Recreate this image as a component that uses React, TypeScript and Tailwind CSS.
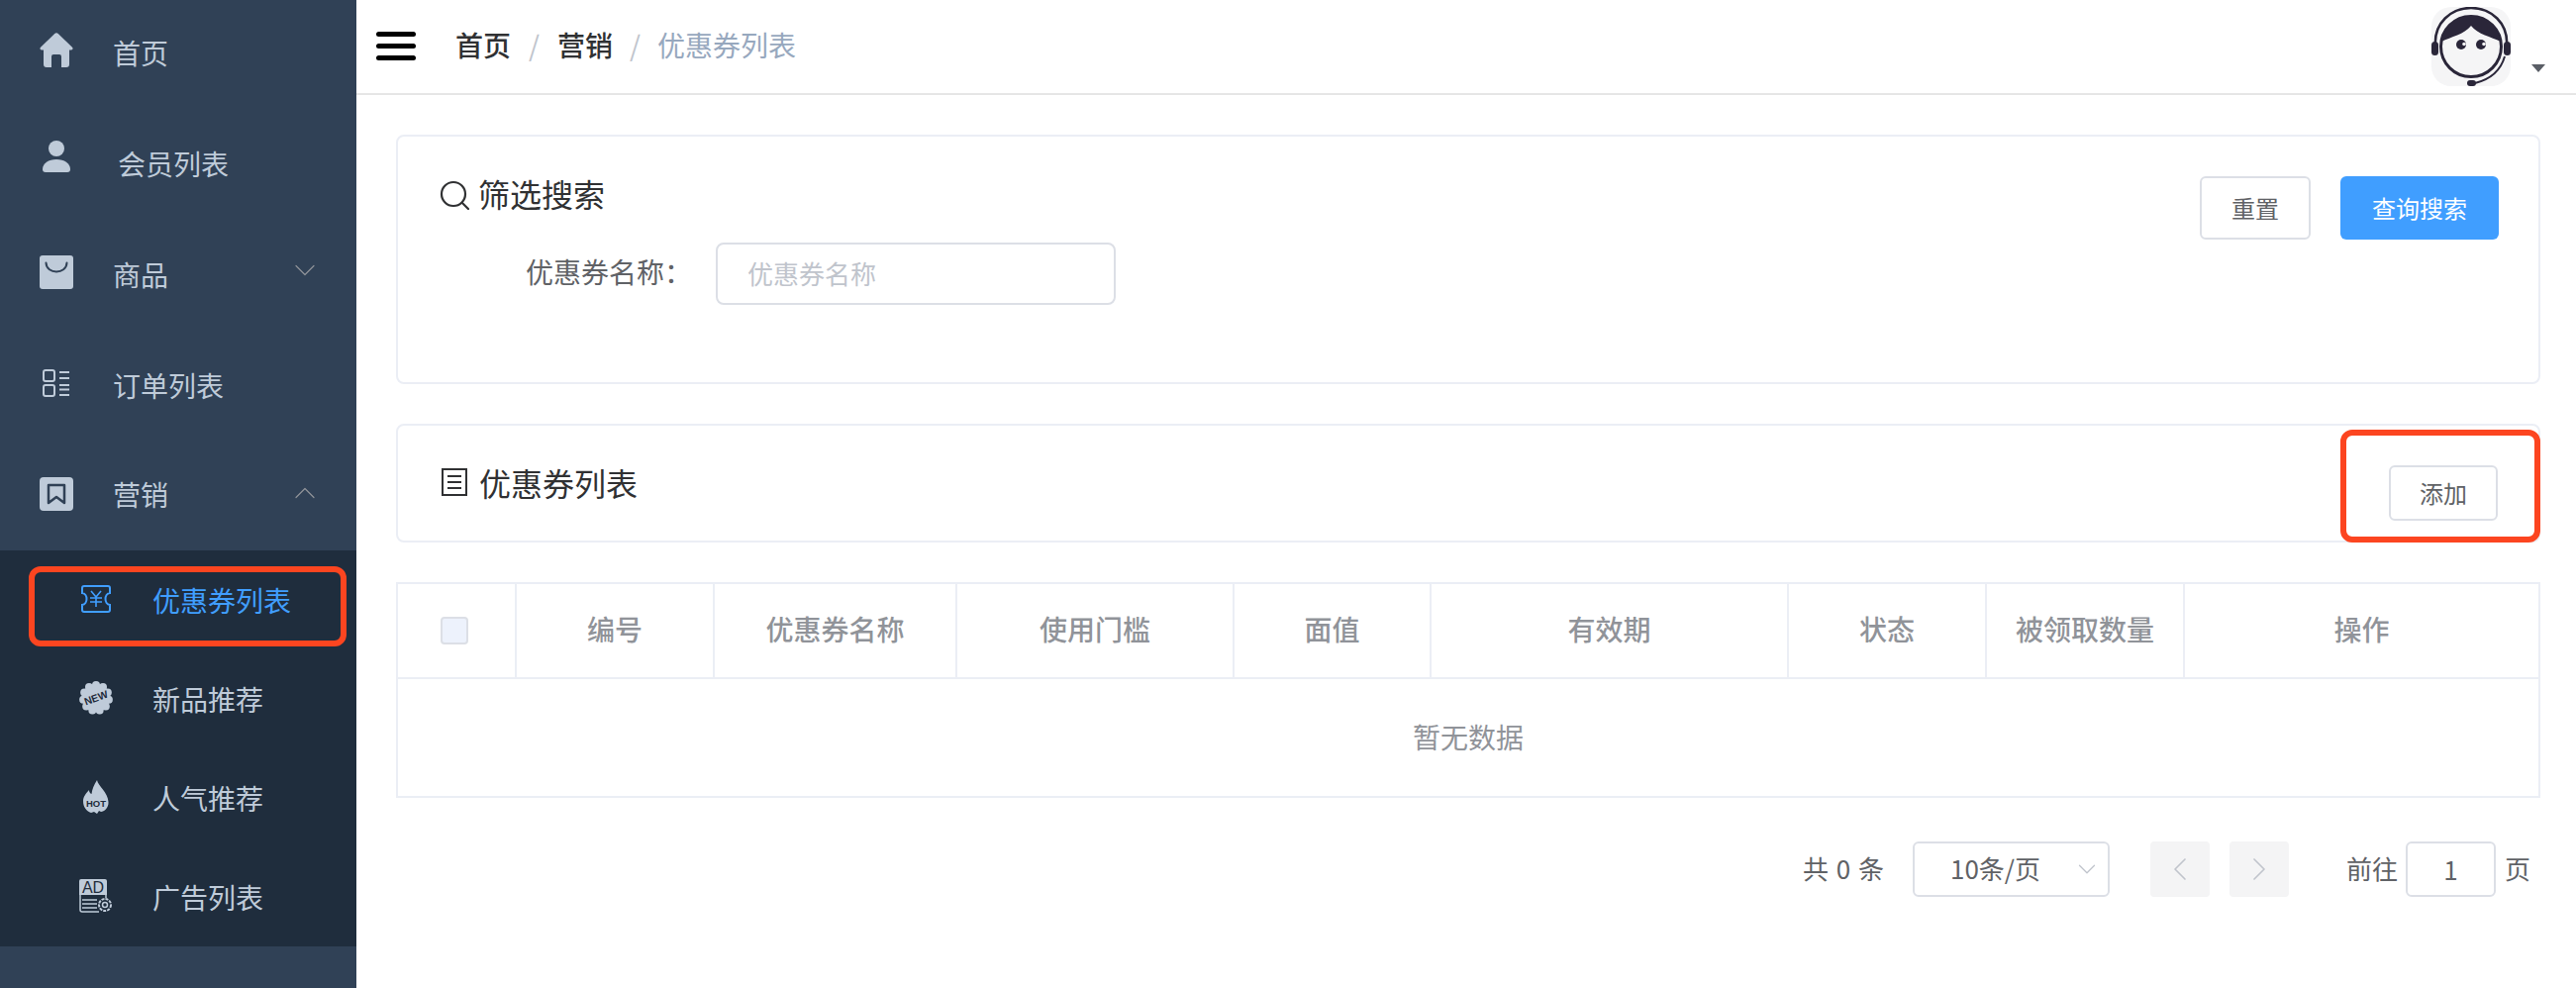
import { ChevronDown, ChevronLeft, ChevronRight, ChevronUp } from 'lucide-react';

const font = { fontFamily: '"Noto Sans CJK SC", "Noto Sans", sans-serif' };

function HomeIcon() {
    return (
        <svg viewBox="0 0 34 35" className="w-[34px] h-[35px] fill-current">
            <path d="M15 1.2a3 3 0 0 1 4 0l14 13.6c1 1 .5 2.7-1 2.7h-2V32a3 3 0 0 1-3 3h-5V24a2 2 0 0 0-2-2h-6a2 2 0 0 0-2 2v11H7a3 3 0 0 1-3-3V17.500H2c-1.500 0-2-1.700-1-2.700z" />
        </svg>
    );
}

function PersonIcon() {
    return (
        <svg viewBox="0 0 28 32" className="w-[28px] h-[32px] fill-current">
            <circle cx="14" cy="8" r="8" />
            <path d="M0 29c0-6 6-10 14-10s14 4 14 10c0 2-1 3-3 3H3c-2 0-3-1-3-3z" />
        </svg>
    );
}

function BagIcon() {
    return (
        <svg viewBox="0 0 34 34" className="w-[34px] h-[34px]">
            <rect width="34" height="34" rx="3" className="fill-current" />
            <path d="M6.500 7.500c.5 12 20.500 12 21 0" fill="none" stroke="#304156" strokeWidth="2" strokeLinecap="round" />
        </svg>
    );
}

function OrderIcon() {
    return (
        <svg viewBox="0 0 28 28" className="w-[28px] h-[28px] fill-none stroke-current" strokeWidth="2">
            <rect x="1" y="1" width="11" height="11" rx="2" />
            <rect x="1" y="16" width="11" height="11" rx="2" />
            <path d="M17 3h10M17 9h10M17 16h10M17 20.500h10M17 26h10" />
        </svg>
    );
}

function BookmarkIcon() {
    return (
        <svg viewBox="0 0 34 34" className="w-[34px] h-[34px]">
            <rect width="34" height="34" rx="4" className="fill-current" />
            <path d="M9 8h16v18l-8-6-8 6z" fill="none" stroke="#304156" strokeWidth="2.500" strokeLinejoin="round" />
        </svg>
    );
}

function CouponIcon() {
    return (
        <svg viewBox="0 0 30 28" className="w-[30px] h-[28px] fill-none stroke-current" strokeWidth="2">
            <path d="M1 3a2 2 0 0 1 2-2h24a2 2 0 0 1 2 2v5c-6 .5-6 11.500 0 12v5a2 2 0 0 1-2 2H3a2 2 0 0 1-2-2v-5c6-.5 6-11.500 0-12z" />
            <path d="M10 6l5 6 5-6M9 13h12M9 17h12M15 12v10" strokeWidth="1.600" />
        </svg>
    );
}

const bumps = Array.from({ length: 11 }, (_, i) => (i * 2 * Math.PI) / 11);

function NewIcon() {
    return (
        <svg viewBox="0 0 34 34" className="w-[34px] h-[34px]">
            <g className="fill-current">
                <circle cx="17" cy="17" r="14" />
                {bumps.map((a) => (
                    <circle key={a} cx={17 + 13 * Math.sin(a)} cy={17 - 13 * Math.cos(a)} r="4" />
                ))}
            </g>
            <text x="17" y="20.500" textAnchor="middle" fontSize="10.500" fontWeight="700" fill="#1f2d3d" transform="rotate(-20 17 17)" fontFamily="Liberation Sans, sans-serif">
                NEW
            </text>
        </svg>
    );
}

function HotIcon() {
    return (
        <svg viewBox="0 0 26 34" className="w-[26px] h-[34px]">
            <path
                className="fill-current"
                d="M14 0C15 6 25 12 25.500 22 26 28 21 32 18 32L16 31 14 34 11 32 8 33C3 31 0 27 0 21 0 17 3 13 6 10 6 12 7 13.500 8.500 14 9 9 11 5 14 0z"
            />
            <text x="13" y="26.500" textAnchor="middle" fontSize="9.500" fontWeight="700" fill="#1f2d3d" fontFamily="Liberation Sans, sans-serif">
                HOT
            </text>
        </svg>
    );
}

function AdIcon() {
    return (
        <svg viewBox="0 0 34 34" className="w-[34px] h-[34px]">
            <path className="fill-current" d="M2 0h24a2 2 0 0 1 2 2v14H0V2a2 2 0 0 1 2-2z" />
            <text x="14" y="14" textAnchor="middle" fontSize="16" fill="#1f2d3d" fontFamily="Liberation Sans, sans-serif">
                AD
            </text>
            <g className="fill-none stroke-current" strokeWidth="1.500">
                <path d="M1 15v16a2 2 0 0 0 2 2h17" />
                <path d="M27 15v4M3 21h15M3 25h15M3 29h15" />
                <circle cx="26" cy="26" r="6" strokeWidth="2" strokeDasharray="3 1" />
                <circle cx="26" cy="26" r="2.500" />
            </g>
        </svg>
    );
}

function MenuRow({ icon, iconClass, label, textClass, height, chevron }: { icon: React.ReactNode; iconClass: string; label: string; textClass?: string; height: string; chevron?: 'up' | 'down' }) {
    return (
        <div className={`flex ${height} items-center text-[#bfcbd9]`}>
            <div className={`w-[114px] shrink-0 flex justify-center ${iconClass}`}>{icon}</div>
            <span className={`text-[28px] leading-none pb-[6px] ${textClass ?? ''}`}>{label}</span>
            {chevron === 'down' && <ChevronDown className="ml-auto mr-[34px] mb-[14px] w-[36px] h-[36px] text-[#909399]" strokeWidth={0.8} />}
            {chevron === 'up' && <ChevronUp className="ml-auto mr-[34px] mb-[8px] w-[36px] h-[36px] text-[#909399]" strokeWidth={0.8} />}
        </div>
    );
}

function SubRow({ icon, label, active }: { icon: React.ReactNode; label: string; active?: boolean }) {
    return (
        <div className={`flex h-[100px] items-center ${active ? 'text-[#409eff]' : 'text-[#bfcbd9]'}`}>
            <div className="w-[154px] shrink-0 flex justify-center pl-[40px] pb-[2px]">{icon}</div>
            <span className="text-[28px] leading-none">{label}</span>
        </div>
    );
}

function Sidebar() {
    return (
        <aside className="w-[360px] shrink-0 bg-[#304156]">
            <MenuRow icon={<HomeIcon />} iconClass="pb-[12px]" label="首页" height="h-[112px]" />
            <MenuRow icon={<PersonIcon />} iconClass="pb-[20px]" label="会员列表" textClass="ml-[5px]" height="h-[112px]" />
            <MenuRow icon={<BagIcon />} iconClass="pb-[10px]" label="商品" height="h-[112px]" chevron="down" />
            <MenuRow icon={<OrderIcon />} iconClass="pb-[10px]" label="订单列表" height="h-[112px]" />
            <MenuRow icon={<BookmarkIcon />} iconClass="pb-[6px]" label="营销" height="h-[108px]" chevron="up" />
            <div className="relative bg-[#1f2d3d]">
                <SubRow icon={<CouponIcon />} label="优惠券列表" active />
                <SubRow icon={<NewIcon />} label="新品推荐" />
                <SubRow icon={<HotIcon />} label="人气推荐" />
                <SubRow icon={<AdIcon />} label="广告列表" />
                <div className="absolute left-[29px] top-[16px] w-[321px] h-[81px] border-[6px] border-[#fc4520] rounded-[12px]" />
            </div>
        </aside>
    );
}

function Avatar() {
    return (
        <svg viewBox="0 0 80 80" className="w-[80px] h-[80px]">
            <rect width="80" height="80" rx="20" fill="#f5f5f6" />
            <path d="M4 40C2 16 20 1 40 1s38 15 36 39" fill="none" stroke="#2a2639" strokeWidth="2.500" />
            <rect x="0" y="35" width="7" height="14" rx="3.500" fill="#2a2639" />
            <rect x="73" y="35" width="7" height="14" rx="3.500" fill="#2a2639" />
            <circle cx="40" cy="40" r="30.500" fill="none" stroke="#2a2639" strokeWidth="3" />
            <path d="M10 35C20 30 33 28 40 19 47 28 60 30 70 35 66 18 54 9 40 9S14 18 10 35z" fill="#2a2639" />
            <circle cx="30" cy="38" r="5" fill="#2a2639" />
            <circle cx="50" cy="38" r="5" fill="#2a2639" />
            <circle cx="33" cy="37.500" r="1.800" fill="#f5f5f6" />
            <circle cx="53" cy="37.500" r="1.800" fill="#f5f5f6" />
            <path d="M74 50C70 64 60 73 44 77" fill="none" stroke="#2a2639" strokeWidth="2" />
            <rect x="36" y="74" width="9" height="6" rx="3" fill="#2a2639" />
        </svg>
    );
}

function Header() {
    return (
        <header className="h-[96px] shrink-0 border-b-2 border-[#e6e6e6] flex items-center pl-[20px] pr-[31px]">
            <div className="w-[40px] flex flex-col gap-[7px] mb-[1px]">
                <div className="h-[5px] rounded-full bg-black" />
                <div className="h-[5px] rounded-full bg-black" />
                <div className="h-[5px] rounded-full bg-black" />
            </div>
            <nav className="ml-[40px] flex items-center text-[28px] leading-none mb-[4px]">
                <span className="font-medium text-[#303133]">首页</span>
                <span className="mx-[18px] text-[#c0c4cc]">/</span>
                <span className="font-medium text-[#303133]">营销</span>
                <span className="mx-[17px] text-[#c0c4cc]">/</span>
                <span className="text-[#97a8be]">优惠券列表</span>
            </nav>
            <div className="ml-auto flex items-end">
                <Avatar />
                <div className="ml-[21px] mb-[14px] w-0 h-0 border-x-[7px] border-x-transparent border-t-[8px] border-t-[#5a5e66]" />
            </div>
        </header>
    );
}

function SearchIcon() {
    return (
        <svg viewBox="0 0 30 30" className="w-[30px] h-[30px] fill-none stroke-[#303133]" strokeWidth="2.200">
            <circle cx="14" cy="14" r="12" />
            <path d="M23 23l6 6" strokeLinecap="round" />
        </svg>
    );
}

function ListIcon() {
    return (
        <svg viewBox="0 0 26 28" className="w-[26px] h-[28px] fill-none stroke-[#303133]" strokeWidth="2">
            <rect x="1" y="1" width="24" height="26" />
            <path d="M6 8h14M6 14h14M6 20h14" />
        </svg>
    );
}

function SearchCard() {
    return (
        <section className="h-[252px] border-2 border-[#ebeef5] rounded-[8px] flex justify-between pl-[42px] pr-[40px] pt-[40px]">
            <div className="-mt-[3px]">
                <div className="flex items-center gap-[9px] text-[32px] leading-[40px] text-[#303133]">
                    <SearchIcon />
                    <span className="pb-[3px]">筛选搜索</span>
                </div>
                <div className="mt-[27px] flex items-center ml-[87px]">
                    <span className="text-[28px] leading-none text-[#606266] w-[192px] pb-[5px]">优惠券名称：</span>
                    <div className="w-[404px] h-[63px] border-2 border-[#dcdfe6] rounded-[8px] flex items-center px-[30px] pb-[3px] text-[26px] text-[#c0c4cc]">优惠券名称</div>
                </div>
            </div>
            <div className="flex gap-[30px]">
                <button className="w-[112px] h-[64px] border-2 border-[#dcdfe6] rounded-[6px] text-[24px] text-[#606266]">重置</button>
                <button className="w-[160px] h-[64px] rounded-[6px] bg-[#409eff] text-[24px] text-white">查询搜索</button>
            </div>
        </section>
    );
}

function ListCard() {
    return (
        <section className="relative h-[120px] border-2 border-[#ebeef5] rounded-[8px] flex items-center justify-between pl-[44px] pr-[41px]">
            <div className="flex items-center gap-[12px] text-[32px] leading-none text-[#303133] mb-[2px]">
                <ListIcon />
                <span>优惠券列表</span>
            </div>
            <button className="w-[110px] h-[56px] mt-[20px] border-2 border-[#dcdfe6] rounded-[6px] text-[24px] text-[#606266]">添加</button>
            <div className="absolute -right-[2px] -bottom-[2px] w-[202px] h-[114px] border-[6px] border-[#fc4520] rounded-[12px]" />
        </section>
    );
}

const columns = [
    { label: '编号', w: 'w-[200px]' },
    { label: '优惠券名称', w: 'w-[245px]' },
    { label: '使用门槛', w: 'w-[280px]' },
    { label: '面值', w: 'w-[199px]' },
    { label: '有效期', w: 'w-[361px]' },
    { label: '状态', w: 'w-[200px]' },
    { label: '被领取数量', w: 'w-[200px]' },
];

function CouponTable() {
    return (
        <section className="border-2 border-[#ebeef5]">
            <div className="flex h-[96px] border-b-2 border-[#ebeef5] text-[28px] font-medium text-[#909399]">
                <div className="w-[120px] shrink-0 border-r-2 border-[#ebeef5] flex items-center justify-center pr-[4px]">
                    <div className="w-[28px] h-[28px] rounded-[4px] border-2 border-[#dcdfe6] bg-[#edf2fc]" />
                </div>
                {columns.map((c) => (
                    <div key={c.label} className={`${c.w} shrink-0 border-r-2 border-[#ebeef5] flex items-center justify-center pb-[4px]`}>
                        {c.label}
                    </div>
                ))}
                <div className="flex-1 flex items-center justify-center pb-[4px]">操作</div>
            </div>
            <div className="h-[118px] flex items-center justify-center text-[28px] text-[#909399] pb-[2px]">暂无数据</div>
        </section>
    );
}

function Pagination() {
    return (
        <div className="mt-[44px] flex items-center justify-end pr-[10px] text-[26px] text-[#606266] h-[56px]">
            <span className="[word-spacing:2px] pb-[4px]">共 0 条</span>
            <div className="ml-[29px] w-[199px] h-[56px] border-2 border-[#dcdfe6] rounded-[6px] flex items-center pl-[36px] pr-[6px]">
                <span className="pb-[4px]">10条/页</span>
                <ChevronDown className="ml-auto w-[30px] h-[30px] text-[#c0c4cc]" strokeWidth={1} />
            </div>
            <div className="ml-[41px] w-[60px] h-[56px] rounded-[4px] bg-[#f4f4f5] flex items-center justify-center">
                <ChevronLeft className="w-[40px] h-[40px] text-[#c0c4cc]" strokeWidth={1} />
            </div>
            <div className="ml-[20px] w-[60px] h-[56px] rounded-[4px] bg-[#f4f4f5] flex items-center justify-center">
                <ChevronRight className="w-[40px] h-[40px] text-[#c0c4cc]" strokeWidth={1} />
            </div>
            <span className="ml-[58px] pb-[4px]">前往</span>
            <div className="ml-[8px] w-[91px] h-[56px] border-2 border-[#dcdfe6] rounded-[6px] flex items-center justify-center pb-[2px]">1</div>
            <span className="ml-[9px] pb-[4px]">页</span>
        </div>
    );
}

export default function App() {
    return (
        <div className="flex h-[998px] overflow-hidden bg-white" style={font}>
            <Sidebar />
            <main className="flex-1 flex flex-col min-w-0">
                <Header />
                <div className="pt-[40px] pl-[40px] pr-[36px] flex flex-col">
                    <SearchCard />
                    <div className="mt-[40px]">
                        <ListCard />
                    </div>
                    <div className="mt-[40px]">
                        <CouponTable />
                    </div>
                    <Pagination />
                </div>
            </main>
        </div>
    );
}
